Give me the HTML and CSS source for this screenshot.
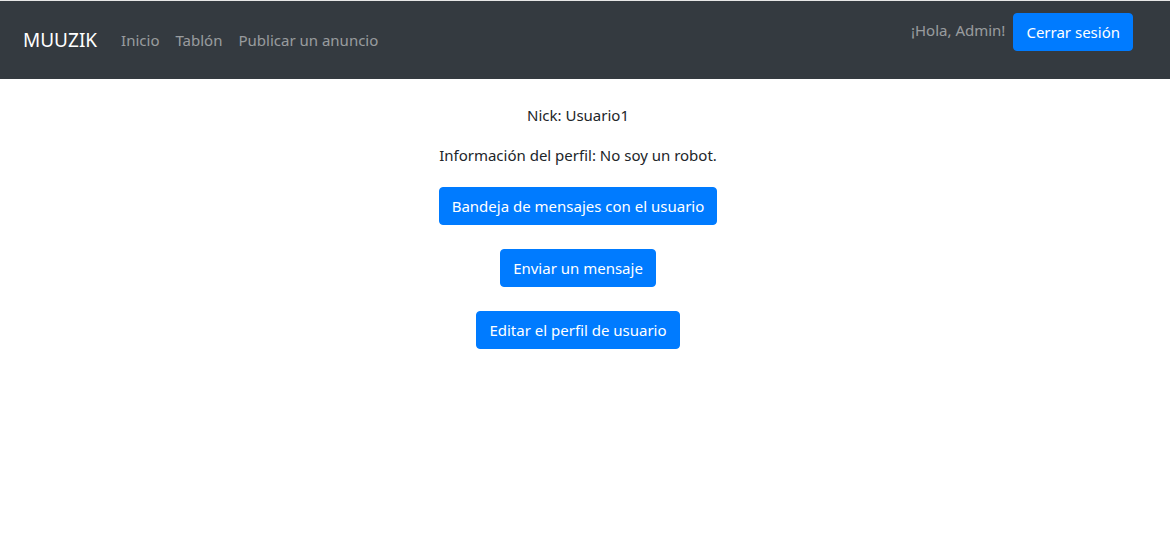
FILE: index.html
```html
<!DOCTYPE html>
<html lang="es">
<head>
<meta charset="utf-8">
<title>MUUZIK</title>
<link rel="stylesheet" href="styles.css">
</head>
<body>
<nav class="navbar">
  <div class="nav-left">
    <a class="brand" href="#">MUUZIK</a>
    <ul class="nav-links">
      <li><a href="#">Inicio</a></li>
      <li><a href="#">Tablón</a></li>
      <li><a href="#">Publicar un anuncio</a></li>
    </ul>
  </div>
  <div class="nav-right">
    <span class="greeting">¡Hola, Admin!</span>
    <button class="btn">Cerrar sesión</button>
  </div>
</nav>
<main class="profile">
  <p class="line">Nick: Usuario1</p>
  <p class="line">Información del perfil: No soy un robot.</p>
  <div class="actions">
    <button class="btn">Bandeja de mensajes con el usuario</button>
    <button class="btn">Enviar un mensaje</button>
    <button class="btn">Editar el perfil de usuario</button>
  </div>
</main>
</body>
</html>
```
FILE: styles.css
```css
html, body {
  margin: 0;
  padding: 0;
}
body {
  font-family: "Segoe UI", "Noto Sans", sans-serif;
  font-size: 15px;
  line-height: 24px;
  color: #212529;
  background: #fff;
  border-top: 1px solid #e6e6e6;
}
.navbar {
  background: #343a40;
  height: 78px;
  display: flex;
  align-items: center;
  justify-content: space-between;
  padding: 0 37px 0 23px;
}
.nav-left {
  display: flex;
  align-items: center;
}
.brand {
  color: #fff;
  font-size: 19px;
  line-height: 30px;
  text-decoration: none;
  margin-right: 16px;
}
.nav-links {
  list-style: none;
  margin: 0;
  padding: 0;
  display: flex;
}
.nav-links a {
  display: block;
  padding: 8px 8px;
  color: rgba(255, 255, 255, 0.5);
  text-decoration: none;
}
.nav-right {
  display: flex;
  align-items: flex-start;
  padding-bottom: 16px;
}
.greeting {
  color: rgba(255, 255, 255, 0.5);
  margin-right: 8px;
  line-height: 34px;
}
.btn {
  font-family: inherit;
  font-size: 15px;
  line-height: 24px;
  color: #fff;
  background: #007bff;
  border: 1px solid #007bff;
  border-radius: 4px;
  padding: 6px 12px;
  cursor: pointer;
}
.profile {
  display: flex;
  flex-direction: column;
  align-items: center;
  padding: 24px 14px 0 0;
}
.line {
  margin: 0 0 16px;
}
.actions {
  display: flex;
  flex-direction: column;
  align-items: center;
  gap: 24px;
  margin-top: 4px;
}
```
